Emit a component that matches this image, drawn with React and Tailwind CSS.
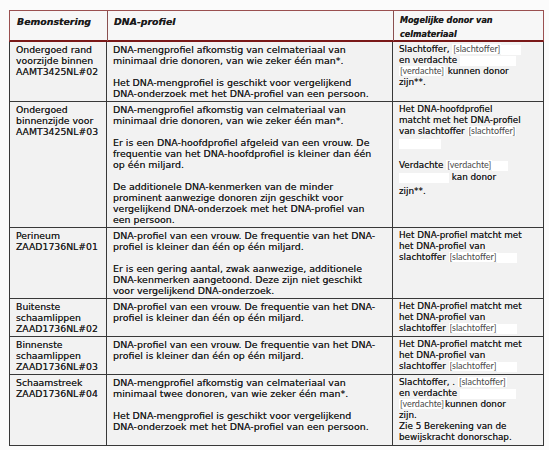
const Red = ({ children }) => (
    <span
        className="inline-block bg-white px-[1px] leading-[10px] text-[#4a4a4a] font-normal not-italic [text-shadow:none]"
        style={{ fontFamily: 'Lato, "Open Sans", sans-serif', fontSize: '9px' }}
    >
        {children}
    </span>
);

const Blank = ({ w }) => <span className="inline-block bg-white h-[10px] align-middle" style={{ width: w }} />;

const Lines = ({ lines }) => (
    <div>
        {lines.map((l, i) => (
            l === null
                ? <div key={i} className="h-[11px]" />
                : <div key={i} className="whitespace-nowrap h-[11px]">{l}</div>
        ))}
    </div>
);

const mixOne = [
    'DNA-mengprofiel afkomstig van celmateriaal van',
    'minimaal drie donoren, van wie zeker één man*.',
];
const mixTail = [
    'Het DNA-mengprofiel is geschikt voor vergelijkend',
    'DNA-onderzoek met het DNA-profiel van een persoon.',
];
const vrouw = [
    'DNA-profiel van een vrouw. De frequentie van het DNA-',
    'profiel is kleiner dan één op één miljard.',
];
const match = [
    'Het DNA-profiel matcht met',
    'het DNA-profiel van',
    <>slachtoffer <Red>[slachtoffer]</Red><Blank w={20} /></>,
];

const rows = [
    {
        sample: ['Ondergoed rand', 'voorzijde binnen', 'AAMT3425NL#02'],
        profile: [...mixOne, null, ...mixTail],
        donor: [
            <>Slachtoffer, <Red>[slachtoffer]</Red><Blank w={20} /></>,
            <>en verdachte <Blank w={56} /></>,
            <><Red>[verdachte]</Red> kunnen donor</>,
            'zijn**.',
        ],
    },
    {
        sample: ['Ondergoed', 'binnenzijde voor', 'AAMT3425NL#03'],
        profile: [
            ...mixOne, null,
            'Er is een DNA-hoofdprofiel afgeleid van een vrouw. De',
            'frequentie van het DNA-hoofdprofiel is kleiner dan één',
            'op één miljard.', null,
            'De additionele DNA-kenmerken van de minder',
            'prominent aanwezige donoren zijn geschikt voor',
            'vergelijkend DNA-onderzoek met het DNA-profiel van',
            'een persoon.',
        ],
        donor: [
            'Het DNA-hoofdprofiel',
            'matcht met het DNA-profiel',
            <>van slachtoffer <Red>[slachtoffer]</Red></>,
            <span className="inline-block pt-[1px]"><Blank w={42} /></span>,
            null,
            <span className="inline-block pt-[1px]">Verdachte <Red>[verdachte]</Red><Blank w={16} /></span>,
            <span className="inline-block pt-[2px]"><Blank w={50} /> kan donor</span>,
            <span className="inline-block pt-[5px]">zijn**.</span>,
        ],
    },
    {
        sample: ['Perineum', 'ZAAD1736NL#01'],
        profile: [
            ...vrouw, null,
            'Er is een gering aantal, zwak aanwezige, additionele',
            'DNA-kenmerken aangetoond. Deze zijn niet geschikt',
            'voor vergelijkend DNA-onderzoek.',
        ],
        donor: match,
    },
    { sample: ['Buitenste', 'schaamlippen', 'ZAAD1736NL#02'], profile: vrouw, donor: match },
    { sample: ['Binnenste', 'schaamlippen', 'ZAAD1736NL#03'], profile: vrouw, donor: match },
    {
        sample: ['Schaamstreek', 'ZAAD1736NL#04'],
        profile: [
            'DNA-mengprofiel afkomstig van celmateriaal van',
            'minimaal twee donoren, van wie zeker één man*.', null,
            ...mixTail,
        ],
        donor: [
            <>Slachtoffer, . <Red>[slachtoffer]</Red></>,
            <>en verdachte <Blank w={56} /></>,
            <><Red>[verdachte]</Red>kunnen donor</>,
            'zijn.',
            'Zie 5 Berekening van de',
            'bewijskracht donorschap.',
        ],
    },
];

export default function App() {
    return (
        <div
            className="w-[549px] h-[450px] overflow-hidden bg-[#fbfbfb] pt-[10px] pl-[9px] text-[#1c1c1c]"
            style={{ fontFamily: '"DejaVu Sans", Verdana, sans-serif' }}
        >
            <div className="w-[535px] bg-[#f2f2f2] [text-shadow:0_0_0.6px_rgba(0,0,0,0.7)]">
                {/* header */}
                <div className="grid grid-cols-[98px_286px_151px] h-[32px] bg-[#f7f7f7] border border-[#9a5050] border-b-[2px] border-b-[#7a1818] font-bold italic leading-[13px]">
                    <div className="pl-[7px] pt-[4px] text-[9.4px] border-r border-[#8a5050]">Bemonstering</div>
                    <div className="pl-[6px] pt-[4px] text-[9.4px] border-r border-[#8a5050]">DNA-profiel</div>
                    <div className="pl-[6px] pt-[3px] text-[8.1px] leading-[13.5px]">
                        Mogelijke donor van<br />celmateriaal
                    </div>
                </div>

                {/* body */}
                <div className="border-x-[1.5px] border-[#383838] leading-[11px]">
                    {rows.map((r, i) => (
                        <div
                            key={i}
                            className="grid grid-cols-[97px_286px_149px] border-b-[1.5px] border-[#383838]"
                        >
                            <div className="pl-[6px] pt-[2px] pb-[2px] text-[9.3px] border-r-[1.5px] border-[#383838]">
                                <Lines lines={r.sample} />
                            </div>
                            <div className="pl-[6px] pt-[2px] pb-[2px] text-[9.45px] border-r-[1.5px] border-[#383838]">
                                <Lines lines={r.profile} />
                            </div>
                            <div className="pl-[6px] pt-[2px] pb-[2px] text-[8.8px]">
                                <Lines lines={r.donor} />
                            </div>
                        </div>
                    ))}
                </div>
            </div>
        </div>
    );
}
